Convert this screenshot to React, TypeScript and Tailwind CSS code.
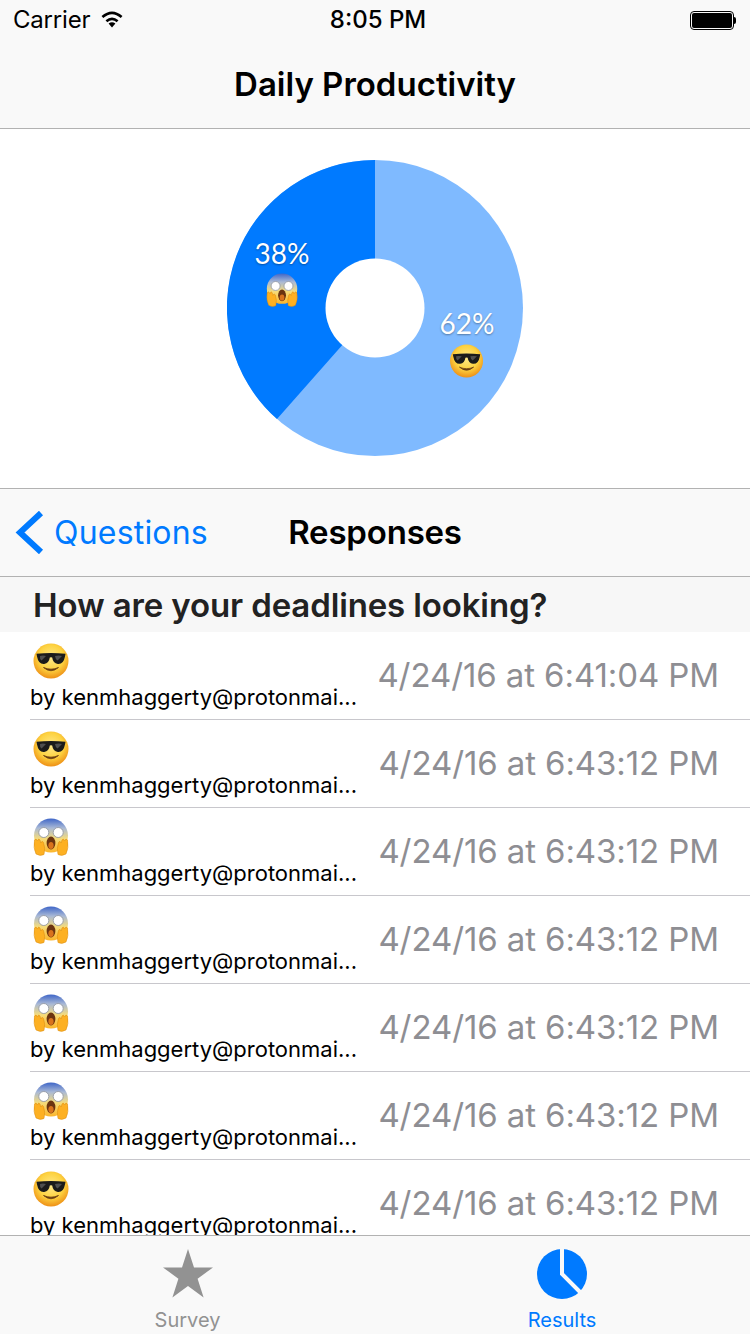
import React from "react";

function CoolEmoji({ className, id }: { className: string; id: string }) {
  return (
    <svg viewBox="0 0 36 36" className={className}>
      <defs>
        <radialGradient id={id} cx="50%" cy="40%" r="60%">
          <stop offset="0%" stopColor="#ffe98a" />
          <stop offset="60%" stopColor="#fdd240" />
          <stop offset="100%" stopColor="#ee9016" />
        </radialGradient>
      </defs>
      <circle cx="18" cy="18" r="17.5" fill={`url(#${id})`} />
      <path d="M3.5 10.8 Q18 9.4 32.5 10.8 L32 13.5 Q30.5 21.5 24.8 21 Q20 20.5 19.2 14.6 Q18 13.8 16.8 14.6 Q16 20.5 11.2 21 Q5.5 21.5 4 13.5 Z" fill="#1b1b1b" />
      <path d="M7 13 Q10 12.2 13 13 L8.5 17.5 Q6.5 16 7 13 Z M22 13 Q26 12.2 29 13 L24.5 17.5 Q22.5 16.5 22 13 Z" fill="#4f4f4f" />
      <path d="M10.5 24.5 Q18 31 25.5 24.5 Q18 27.8 10.5 24.5 Z" fill="#6b3d12" stroke="#6b3d12" strokeWidth="0.8" strokeLinejoin="round" />
    </svg>
  );
}

function ScreamEmoji({ className, id }: { className: string; id: string }) {
  return (
    <svg viewBox="0 0 36 38" className={className}>
      <defs>
        <linearGradient id={id} x1="0" y1="0" x2="0" y2="1">
          <stop offset="0%" stopColor="#3f66c8" />
          <stop offset="28%" stopColor="#a9b9d6" />
          <stop offset="60%" stopColor="#f6dc7a" />
          <stop offset="100%" stopColor="#fbb52b" />
        </linearGradient>
      </defs>
      <circle cx="18" cy="17.5" r="17" fill={`url(#${id})`} />
      <circle cx="10.8" cy="14.5" r="5" fill="#fff" stroke="#8a8f9c" strokeWidth="0.8" />
      <circle cx="25.2" cy="14.5" r="5" fill="#fff" stroke="#8a8f9c" strokeWidth="0.8" />
      <ellipse cx="18" cy="25" rx="4.4" ry="6.5" fill="#6b3410" />
      <ellipse cx="18" cy="27.5" rx="2.6" ry="3.6" fill="#d9731d" />
      <path d="M1.5 22 Q0 30 3 36 Q7 38.5 11 36.5 Q12.5 30 10.5 24.5 Q9 22 7.8 25 L7 22 Q5.5 19.5 4.5 23 Q3 19.5 1.5 22 Z" fill="#fdb022" stroke="#d98a10" strokeWidth="0.5" />
      <path d="M34.5 22 Q36 30 33 36 Q29 38.5 25 36.5 Q23.5 30 25.5 24.5 Q27 22 28.2 25 L29 22 Q30.5 19.5 31.5 23 Q33 19.5 34.5 22 Z" fill="#fdb022" stroke="#d98a10" strokeWidth="0.5" />
    </svg>
  );
}

const rows: { kind: "cool" | "scream"; date: string }[] = [
  { kind: "cool", date: "4/24/16 at 6:41:04 PM" },
  { kind: "cool", date: "4/24/16 at 6:43:12 PM" },
  { kind: "scream", date: "4/24/16 at 6:43:12 PM" },
  { kind: "scream", date: "4/24/16 at 6:43:12 PM" },
  { kind: "scream", date: "4/24/16 at 6:43:12 PM" },
  { kind: "scream", date: "4/24/16 at 6:43:12 PM" },
  { kind: "cool", date: "4/24/16 at 6:43:12 PM" },
];

const labelStyle = { fontFamily: "Lato, sans-serif", textShadow: "0 1px 2px rgba(0,0,0,.35)" };

export default function App() {
  const font = { fontFamily: "Inter, 'Liberation Sans', sans-serif" };
  return (
    <div style={font} className="w-[750px] h-[1334px] flex flex-col bg-white overflow-hidden">
      {/* Top bar */}
      <header className="h-[129px] shrink-0 bg-[#f9f9f9] border-b border-[#b2b2b2] flex flex-col">
        <div className="h-[40px] flex items-center justify-between pl-[13px] pr-[14px] relative">
          <div className="flex items-center gap-[9px]">
            <span className="text-[24px] leading-none text-black tracking-[-0.2px]">Carrier</span>
            <svg width="26" height="20" viewBox="0 0 26 20" className="mt-[-2px]">
              <path d="M13 18.5 L9.6 14.6 Q13 11.8 16.4 14.6 Z" fill="#000" />
              <path d="M7.4 12.2 Q13 7.4 18.6 12.2" fill="none" stroke="#000" strokeWidth="2.6" />
              <path d="M3.4 8 Q13 -0.4 22.6 8" fill="none" stroke="#000" strokeWidth="2.6" />
            </svg>
          </div>
          <span className="absolute left-0 right-0 pl-[6px] text-center text-[24px] leading-none font-medium text-black">8:05 PM</span>
          <div className="flex items-center">
            <div className="w-[44px] h-[19px] rounded-[4px] border border-black p-[1px]">
              <div className="w-full h-full rounded-[2px] bg-black" />
            </div>
            <div className="w-[2px] h-[7px] bg-black rounded-r-[2px]" />
          </div>
        </div>
        <div className="flex-1 flex items-center justify-center">
          <h1 className="text-[33px] leading-none font-semibold text-black">Daily Productivity</h1>
        </div>
      </header>

      {/* Chart */}
      <section className="h-[359px] shrink-0 flex items-center justify-center relative">
        <svg width="296" height="296" viewBox="-148 -148 296 296" className="mt-[-1px]">
          <circle r="148" fill="#7fbaff" />
          <path d="M0 0 L0 -148 A148 148 0 0 0 -98 111 Z" fill="#007aff" />
          <circle r="49.5" fill="#fff" />
        </svg>
        <div className="absolute left-[282px] top-[110px] -translate-x-1/2 flex flex-col items-center">
          <span style={labelStyle} className="text-[28px] leading-none font-normal text-white">38%</span>
          <ScreamEmoji id="chart-scream" className="w-[33px] h-[34px] mt-[6px]" />
        </div>
        <div className="absolute left-[467px] top-[180px] -translate-x-1/2 flex flex-col items-center">
          <span style={labelStyle} className="text-[28px] leading-none font-normal text-white">62%</span>
          <CoolEmoji id="chart-cool" className="w-[34px] h-[34px] mt-[7px]" />
        </div>
      </section>

      {/* Second nav */}
      <nav className="h-[89px] shrink-0 bg-[#f9f9f9] border-y border-[#b2b2b2] grid grid-cols-[1fr_auto_1fr] items-center">
        <div className="flex items-center pl-[15px] gap-[10px]">
          <svg width="29" height="43" viewBox="0 0 29 43" className="mt-[-1px]">
            <path d="M26 2 L5 21.5 L26 41" fill="none" stroke="#007aff" strokeWidth="6" />
          </svg>
          <span className="text-[32px] leading-none text-[#007aff] tracking-[0.2px]">Questions</span>
        </div>
        <span className="text-[33px] leading-none font-semibold text-black tracking-[-0.2px]">Responses</span>
        <div />
      </nav>

      {/* Section header */}
      <div className="h-[55px] shrink-0 bg-[#f7f7f7] flex items-center pl-[33px]">
        <h2 className="text-[33px] leading-none font-semibold text-[#222] mt-[1px] tracking-[-0.13px]">How are your deadlines looking?</h2>
      </div>

      {/* List */}
      <main className="flex-1 min-h-0 overflow-hidden">
        {rows.map((r, i) => (
          <div key={i} className="h-[88px] pl-[30px] relative flex justify-between">
            <div className="flex flex-col w-[330px] pt-[11px]">
              <div className="h-[36px]">
                {r.kind === "cool" ? (
                  <CoolEmoji id={`cool-${i}`} className="w-[36px] h-[36px] ml-[3px]" />
                ) : (
                  <ScreamEmoji id={`scream-${i}`} className="w-[36px] h-[38px] ml-[3px] mt-[-1px]" />
                )}
              </div>
              <span className="text-[22px] leading-[26px] text-black whitespace-nowrap mt-[5px]">by kenmhaggerty@protonmai...</span>
            </div>
            <div className="flex items-center pr-[31px] pb-[1px]">
              <span className="text-[33px] leading-none text-[#8e8e93] whitespace-nowrap tracking-[-0.1px]">{r.date}</span>
            </div>
            <div className="absolute left-[30px] right-0 bottom-0 h-[1px] bg-[#c8c7cc]" />
          </div>
        ))}
      </main>

      {/* Tab bar */}
      <footer className="h-[99px] shrink-0 bg-[#f9f9f9] border-t border-[#b2b2b2] grid grid-cols-2">
        <div className="flex flex-col items-center pt-[13px]">
          <svg width="50" height="49" viewBox="0 0 50 49">
            <path d="M25 0 L31 18.4 L50 18.4 L34.6 29.8 L40.6 48.5 L25 37 L9.4 48.5 L15.4 29.8 L0 18.4 L19 18.4 Z" fill="#929292" />
          </svg>
          <span className="text-[20px] leading-none text-[#929292] mt-[12px]">Survey</span>
        </div>
        <div className="flex flex-col items-center pt-[13px] pr-[1px]">
          <svg width="50" height="50" viewBox="-25 -25 50 50">
            <circle r="25" fill="#007aff" />
            <path d="M0 -26 L0 0 L19 19" fill="none" stroke="#f9f9f9" strokeWidth="4" />
          </svg>
          <span className="text-[20px] leading-none text-[#007aff] mt-[11px]">Results</span>
        </div>
      </footer>
    </div>
  );
}
